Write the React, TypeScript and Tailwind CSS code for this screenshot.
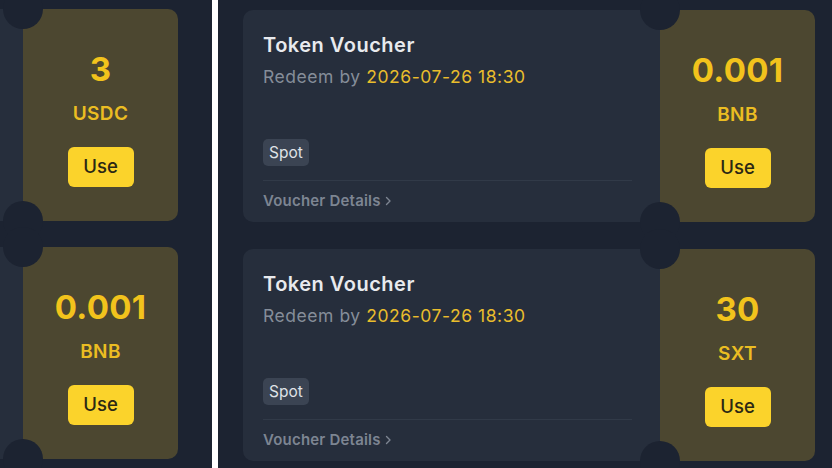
import React from 'react';

interface Voucher {
  amount: string;
  coin: string;
  title: string;
  redeemBy: string;
  tag: string;
}

const LEFT: Voucher[] = [
  { amount: '3', coin: 'USDC', title: 'Token Voucher', redeemBy: '2026-07-26 18:30', tag: 'Spot' },
  { amount: '0.001', coin: 'BNB', title: 'Token Voucher', redeemBy: '2026-07-26 18:30', tag: 'Spot' },
];

const RIGHT: Voucher[] = [
  { amount: '0.001', coin: 'BNB', title: 'Token Voucher', redeemBy: '2026-07-26 18:30', tag: 'Spot' },
  { amount: '30', coin: 'SXT', title: 'Token Voucher', redeemBy: '2026-07-26 18:30', tag: 'Spot' },
];

const Chevron = () => (
  <svg width="8" height="10" viewBox="0 0 8 10" fill="none" className="ml-[3px]">
    <path d="M2.5 1.5 6 5 2.5 8.5" stroke="currentColor" strokeWidth="1.4" strokeLinecap="round" strokeLinejoin="round" />
  </svg>
);

const Stub: React.FC<{ v: Voucher }> = ({ v }) => (
  <div className="flex w-[155px] shrink-0 flex-col items-center rounded-r-[10px] bg-[#4c4730] pt-[40px]">
    <div className="text-[33px] font-bold leading-[40px] tracking-[0.3px] text-[#f2c31c]">{v.amount}</div>
    <div className="mt-[13px] text-[19px] font-semibold leading-[24px] tracking-[0.4px] text-[#ebbd22]">{v.coin}</div>
    <button className="mt-[21px] h-10 w-[66px] rounded-[6px] bg-[#fbd32b] text-[18.5px] font-medium text-[#2b2814]">
      Use
    </button>
  </div>
);

// ticket-style card, notches punched where the stub meets the body
// cropped = only the last strip of the body shows (left screenshot is cut off)
const VoucherCard: React.FC<{ v: Voucher; cropped?: boolean }> = ({ v, cropped }) => {
  const bodyW = cropped ? 23 : 417;
  return (
    <div className="relative flex h-[212px] shrink-0">
      {cropped ? (
        <div className="w-[23px] shrink-0 bg-[#262e3c]" />
      ) : (
        <div className="flex w-[417px] shrink-0 flex-col rounded-l-[10px] bg-[#262e3c] pl-5 pr-[28px] pt-[22px]">
          <div className="text-[20px] font-semibold leading-[26px] tracking-[0.5px] text-[#e8eaee]">{v.title}</div>
          <div className="mt-[7px] text-[17.5px] leading-[24px] tracking-[0.55px] text-[#858d99]">
            Redeem by <span className="text-[#e9bd2c]">{v.redeemBy}</span>
          </div>
          <div className="mt-[50px] flex">
            <span className="rounded-[5px] bg-[#3b4453] px-[6px] text-[15.5px] leading-[27px] text-[#dfe2e7]">{v.tag}</span>
          </div>
          <div className="mt-[14px] border-t border-[#313a48] pt-[10px]">
            <div className="flex items-center text-[15px] font-semibold leading-[20px] tracking-[0.2px] text-[#7d8592]">
              Voucher Details
              <Chevron />
            </div>
          </div>
        </div>
      )}
      <Stub v={v} />
      <div
        className="absolute top-[-20px] h-10 w-10 rounded-full bg-[#1c2331]"
        style={{ left: bodyW - 20 }}
      />
      <div
        className="absolute bottom-[-20px] h-10 w-10 rounded-full bg-[#1c2331]"
        style={{ left: bodyW - 20 }}
      />
    </div>
  );
};

export default function App() {
  return (
    <div
      className="flex h-[468px] w-[832px] overflow-hidden bg-[#1c2331]"
      style={{ fontFamily: 'Inter, "Open Sans", sans-serif' }}
    >
      <div className="flex w-[212px] shrink-0 flex-col gap-[26px] overflow-hidden pt-[9px]">
        {LEFT.map((v, i) => (
          <VoucherCard key={i} v={v} cropped />
        ))}
      </div>
      <div className="w-[6px] shrink-0 bg-white" />
      <div className="flex flex-1 flex-col gap-[27px] overflow-hidden pl-[25px] pt-[10px]">
        {RIGHT.map((v, i) => (
          <VoucherCard key={i} v={v} />
        ))}
      </div>
    </div>
  );
}
